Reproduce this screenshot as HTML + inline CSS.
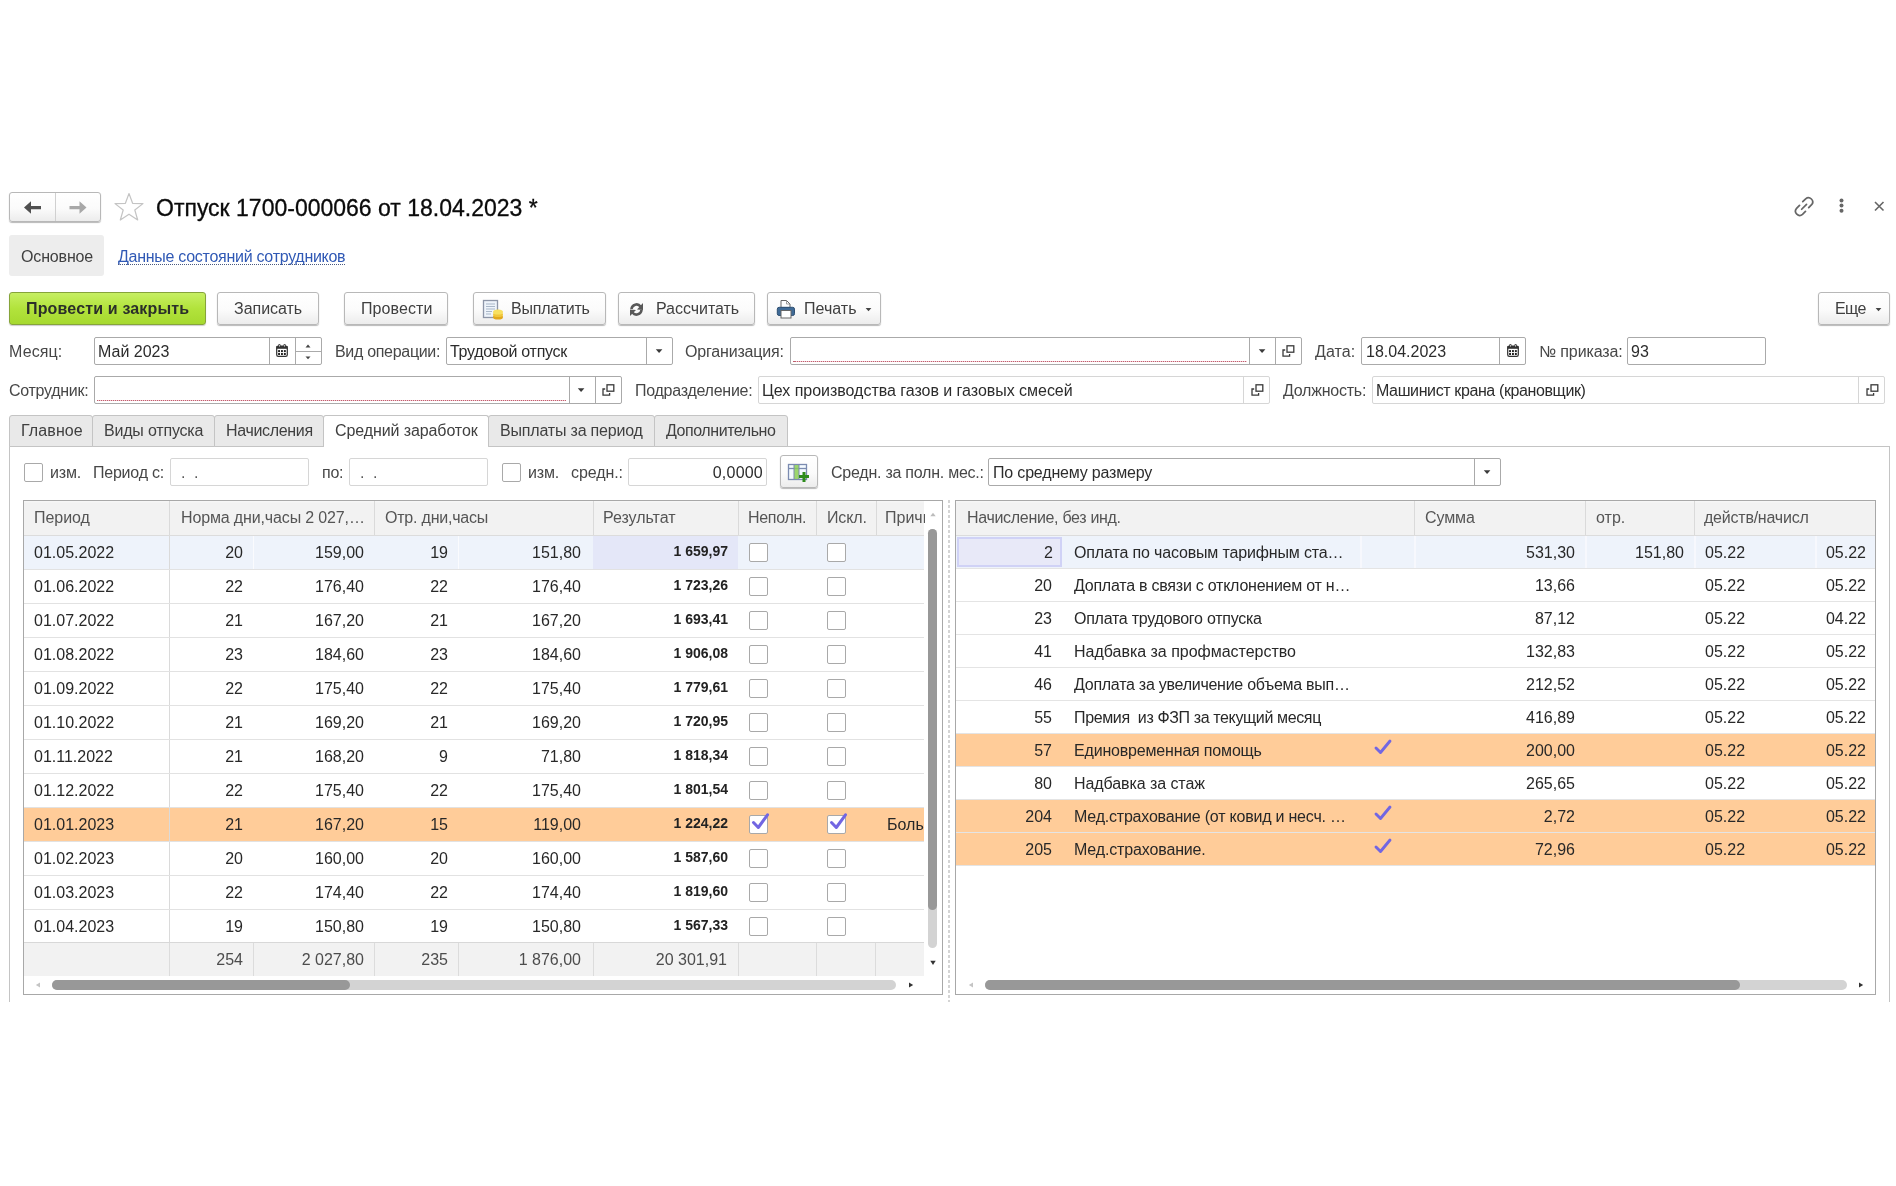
<!DOCTYPE html><html><head><meta charset="utf-8"><title>Отпуск</title><style>
*{box-sizing:border-box}
html,body{margin:0;padding:0;background:#fff}
body{width:1896px;height:1186px;overflow:hidden;position:relative;font-family:"Liberation Sans",sans-serif}
.a{position:absolute}
.t{position:absolute;white-space:pre;line-height:20px;font-family:"Liberation Sans",sans-serif;will-change:transform}
.btn{position:absolute;border:1px solid #b8b8b8;border-radius:3px;background:linear-gradient(#ffffff 0%,#fbfbfb 55%,#ececec 100%);box-shadow:0 1px 1px rgba(0,0,0,0.28)}
.fld{position:absolute;border:1px solid #aaaaaa;border-radius:2px;background:#fff}
.fldl{position:absolute;border:1px solid #d6d6d6;border-radius:2px;background:#fff}
.vl{position:absolute;width:1px}
.hl{position:absolute;height:1px}
.cb{position:absolute;width:19px;height:19px;border:1px solid #a9a9a9;border-radius:2px;background:#fff}
</style></head><body>
<div class="btn" style="left:9px;top:192px;width:92px;height:30px"></div>
<div class="a" style="left:55px;top:193px;width:1px;height:28px;background:#d0d0d0"></div>
<svg class="a" style="left:22px;top:200px" width="22" height="16" viewBox="0 0 22 16"><path d="M2 7.5 L9 1.3 L9 6 L19 6 L19 9.2 L9 9.2 L9 13.7 Z" fill="#505050"/></svg>
<svg class="a" style="left:67px;top:200px" width="22" height="16" viewBox="0 0 22 16"><path d="M19.5 7.5 L12.5 1.3 L12.5 6 L2.5 6 L2.5 9.2 L12.5 9.2 L12.5 13.7 Z" fill="#a8a8a8"/></svg>
<svg class="a" style="left:112px;top:191px" width="34" height="32" viewBox="0 0 34 32"><path d="M17 2.5 L20.6 12.3 L31 12.6 L22.8 19 L25.7 29 L17 23.2 L8.3 29 L11.2 19 L3 12.6 L13.4 12.3 Z" fill="none" stroke="#c4c4c4" stroke-width="1.2" stroke-linejoin="round"/></svg>
<div class="t" style="left:156px;top:198px;font-size:23px;color:#0a0a0a;font-weight:normal;-webkit-text-stroke:0.3px #0a0a0a;">Отпуск 1700-000066 от 18.04.2023 *</div>
<svg class="a" style="left:1792px;top:194px" width="26" height="24" viewBox="0 0 26 24"><g fill="none" stroke="#666" stroke-width="1.6" stroke-linecap="round" transform="translate(-0.6,-0.4) scale(1.08)"><path d="M10.5 7.5 L13.2 4.8 A3.9 3.9 0 0 1 18.7 10.3 L16 13"/><path d="M13 16.5 L10.3 19.2 A3.9 3.9 0 0 1 4.8 13.7 L7.5 11"/><path d="M9.5 14.5 L14 10"/></g></svg>
<svg class="a" style="left:1836px;top:196px" width="12" height="20" viewBox="0 0 12 20"><circle cx="5.5" cy="4.6" r="2" fill="#666"/><circle cx="5.5" cy="9.6" r="2" fill="#666"/><circle cx="5.5" cy="14.8" r="2" fill="#666"/></svg>
<svg class="a" style="left:1872px;top:199px" width="14" height="14" viewBox="0 0 14 14"><path d="M3 3 L11.5 11.5 M11.5 3 L3 11.5" stroke="#666" stroke-width="1.6"/></svg>
<div class="a" style="left:9px;top:235px;width:95px;height:41px;background:#ededed;border-radius:3px"></div>
<div class="t" style="left:21px;top:247px;font-size:16px;color:#404040;font-weight:normal;letter-spacing:-0.157px;">Основное</div>
<div class="t" style="left:118px;top:247px;font-size:16px;color:#3059b5;font-weight:normal;letter-spacing:-0.278px;">Данные состояний сотрудников</div>
<div class="a" style="left:118px;top:264px;width:228px;height:1px;background:repeating-linear-gradient(90deg,#4a5a80 0 1px,transparent 1px 2px)"></div>
<div class="a" style="left:9px;top:292px;width:197px;height:33px;border:1px solid #86a43a;border-radius:3px;background:linear-gradient(#c6ef62 0%,#b2e33c 50%,#a6d92f 100%);box-shadow:0 1px 1px rgba(0,0,0,0.2)"></div>
<div class="t" style="left:26px;top:299px;font-size:16px;color:#2b2f2a;font-weight:bold;letter-spacing:0.159px;">Провести и закрыть</div>
<div class="btn" style="left:217px;top:292px;width:102px;height:33px"></div>
<div class="t" style="left:234px;top:299px;font-size:16px;color:#404040;font-weight:normal;letter-spacing:-0.029px;">Записать</div>
<div class="btn" style="left:344px;top:292px;width:104px;height:33px"></div>
<div class="t" style="left:361px;top:299px;font-size:16px;color:#404040;font-weight:normal;letter-spacing:0.100px;">Провести</div>
<div class="btn" style="left:473px;top:292px;width:133px;height:33px"></div>
<div class="t" style="left:511px;top:299px;font-size:16px;color:#404040;font-weight:normal;letter-spacing:-0.213px;">Выплатить</div>
<svg class="a" style="left:481px;top:298px" width="24" height="24" viewBox="0 0 24 24"><rect x="2.5" y="2.5" width="14" height="17" fill="#eef4fb" stroke="#8d96a8" stroke-width="1.3"/><path d="M5 6 H14 M5 8.5 H14 M5 11 H14 M5 13.5 H11 M5 16 H10" stroke="#a9b7c8" stroke-width="1"/><ellipse cx="17" cy="19" rx="5" ry="2.6" fill="#e2a81c"/><ellipse cx="17" cy="16.5" rx="5" ry="2.6" fill="#f0c63a"/><ellipse cx="17" cy="14" rx="5" ry="2.6" fill="#f8e060"/></svg>
<div class="btn" style="left:618px;top:292px;width:137px;height:33px"></div>
<div class="t" style="left:656px;top:299px;font-size:16px;color:#404040;font-weight:normal;letter-spacing:-0.033px;">Рассчитать</div>
<svg class="a" style="left:628px;top:301px" width="17" height="17" viewBox="0 0 17 17"><g fill="none" stroke="#595959" stroke-width="2.6"><path d="M3.5 8 A5 5 0 0 1 12.5 5.5"/><path d="M13.5 9 A5 5 0 0 1 4.5 11.5"/></g><path d="M15 2 L15 9 L9 8.5 Z" fill="#595959"/><path d="M2 15 L2 8.5 L8 9 Z" fill="#595959"/></svg>
<div class="btn" style="left:767px;top:292px;width:114px;height:33px"></div>
<div class="t" style="left:804px;top:299px;font-size:16px;color:#404040;font-weight:normal;letter-spacing:0.020px;">Печать</div>
<svg class="a" style="left:775px;top:298px" width="22" height="22" viewBox="0 0 22 22"><path d="M6 2.5 H11.5 L15 6 V9.5 H6 Z" fill="#fff" stroke="#666" stroke-width="1"/><path d="M11.5 2.5 V6 H15" fill="none" stroke="#888" stroke-width="0.8"/><rect x="2.3" y="9.3" width="17.2" height="8.2" rx="1.8" fill="#3f6a96" stroke="#2e4f72" stroke-width="1"/><rect x="6" y="12.5" width="10" height="7.5" fill="#fff" stroke="#666" stroke-width="1"/></svg>
<svg class="a" style="left:865px;top:307px" width="8" height="5" viewBox="0 0 8 5"><path d="M0.6 1 H6.4 L3.5 4.2 Z" fill="#444"/></svg>
<div class="btn" style="left:1818px;top:292px;width:72px;height:33px"></div>
<div class="t" style="left:1835px;top:299px;font-size:16px;color:#404040;font-weight:normal;letter-spacing:-0.600px;">Еще</div>
<svg class="a" style="left:1875px;top:307px" width="8" height="5" viewBox="0 0 8 5"><path d="M0.6 1 H6.4 L3.5 4.2 Z" fill="#444"/></svg>
<div class="t" style="left:9px;top:342px;font-size:16px;color:#474747;font-weight:normal;letter-spacing:0.120px;">Месяц:</div>
<div class="fld" style="left:94px;top:337px;width:228px;height:28px"></div>
<div class="a" style="left:269px;top:338px;width:1px;height:26px;background:#aaaaaa"></div>
<div class="a" style="left:295px;top:338px;width:1px;height:26px;background:#aaaaaa"></div>
<div class="a" style="left:296px;top:351px;width:25px;height:1px;background:#aaaaaa"></div>
<div class="t" style="left:98px;top:342px;font-size:16px;color:#2c2c2c;font-weight:normal;">Май 2023</div>
<svg class="a" style="left:275px;top:343px" width="15" height="15" viewBox="0 0 15 15"><rect x="1.7" y="3" width="10.6" height="10.3" rx="1.6" fill="#fff" stroke="#333" stroke-width="1.25"/><rect x="1.5" y="3" width="11" height="2.8" fill="#333"/><rect x="3.3" y="1" width="2.2" height="3.4" rx="1" fill="#333"/><rect x="8.5" y="1" width="2.2" height="3.4" rx="1" fill="#333"/><rect x="4" y="1.8" width="0.8" height="1.8" fill="#ddd"/><rect x="9.2" y="1.8" width="0.8" height="1.8" fill="#ddd"/><g fill="#222"><rect x="3.1" y="7.1" width="1.9" height="2"/><rect x="6" y="7.1" width="1.9" height="2"/><rect x="8.9" y="7.1" width="1.9" height="2"/><rect x="3.1" y="10" width="1.9" height="2"/><rect x="6" y="10" width="1.9" height="2"/><rect x="8.9" y="10" width="1.9" height="2"/></g></svg>
<svg class="a" style="left:305px;top:344px" width="6" height="4" viewBox="0 0 6 4"><path d="M0.5 3.5 H5.5 L3 0.5 Z" fill="#444"/></svg>
<svg class="a" style="left:305px;top:356px" width="6" height="4" viewBox="0 0 6 4"><path d="M0.5 0.5 H5.5 L3 3.3 Z" fill="#444"/></svg>
<div class="t" style="left:335px;top:342px;font-size:16px;color:#474747;font-weight:normal;letter-spacing:-0.308px;">Вид операции:</div>
<div class="fld" style="left:446px;top:337px;width:227px;height:28px"></div>
<div class="a" style="left:646px;top:338px;width:1px;height:26px;background:#aaaaaa"></div>
<div class="t" style="left:450px;top:342px;font-size:16px;color:#2c2c2c;font-weight:normal;letter-spacing:-0.286px;">Трудовой отпуск</div>
<svg class="a" style="left:655px;top:348px" width="9" height="6" viewBox="0 0 9 6"><path d="M0.8 1.2 H7.4 L4.1 5 Z" fill="#3a3a3a"/></svg>
<div class="t" style="left:685px;top:342px;font-size:16px;color:#474747;font-weight:normal;letter-spacing:-0.182px;">Организация:</div>
<div class="fld" style="left:790px;top:337px;width:512px;height:28px"></div>
<div class="a" style="left:1249px;top:338px;width:1px;height:26px;background:#aaaaaa"></div>
<div class="a" style="left:1275px;top:338px;width:1px;height:26px;background:#aaaaaa"></div>
<div class="a" style="left:793px;top:361px;width:454px;height:1px;background:repeating-linear-gradient(90deg,#c0606e 0 1.5px,#f0c8d0 1.5px 2px)"></div>
<svg class="a" style="left:1258px;top:348px" width="9" height="6" viewBox="0 0 9 6"><path d="M0.8 1.2 H7.4 L4.1 5 Z" fill="#3a3a3a"/></svg>
<svg class="a" style="left:1281px;top:344px" width="15" height="15" viewBox="0 0 15 15"><rect x="6" y="1.8" width="6.8" height="6.4" fill="none" stroke="#3a3a3a" stroke-width="1.3"/><path d="M4.2 6 H2 V12.1 H8.6 V10" fill="none" stroke="#3a3a3a" stroke-width="1.3"/></svg>
<div class="t" style="left:1315px;top:342px;font-size:16px;color:#474747;font-weight:normal;letter-spacing:0.075px;">Дата:</div>
<div class="fld" style="left:1361px;top:337px;width:165px;height:28px"></div>
<div class="a" style="left:1499px;top:338px;width:1px;height:26px;background:#aaaaaa"></div>
<div class="t" style="left:1366px;top:342px;font-size:16px;color:#2c2c2c;font-weight:normal;">18.04.2023</div>
<svg class="a" style="left:1506px;top:343px" width="15" height="15" viewBox="0 0 15 15"><rect x="1.7" y="3" width="10.6" height="10.3" rx="1.6" fill="#fff" stroke="#333" stroke-width="1.25"/><rect x="1.5" y="3" width="11" height="2.8" fill="#333"/><rect x="3.3" y="1" width="2.2" height="3.4" rx="1" fill="#333"/><rect x="8.5" y="1" width="2.2" height="3.4" rx="1" fill="#333"/><rect x="4" y="1.8" width="0.8" height="1.8" fill="#ddd"/><rect x="9.2" y="1.8" width="0.8" height="1.8" fill="#ddd"/><g fill="#222"><rect x="3.1" y="7.1" width="1.9" height="2"/><rect x="6" y="7.1" width="1.9" height="2"/><rect x="8.9" y="7.1" width="1.9" height="2"/><rect x="3.1" y="10" width="1.9" height="2"/><rect x="6" y="10" width="1.9" height="2"/><rect x="8.9" y="10" width="1.9" height="2"/></g></svg>
<div class="t" style="left:1539px;top:342px;font-size:16px;color:#474747;font-weight:normal;letter-spacing:-0.133px;">№ приказа:</div>
<div class="fld" style="left:1627px;top:337px;width:139px;height:28px"></div>
<div class="t" style="left:1631px;top:342px;font-size:16px;color:#2c2c2c;font-weight:normal;">93</div>
<div class="t" style="left:9px;top:381px;font-size:16px;color:#474747;font-weight:normal;letter-spacing:-0.278px;">Сотрудник:</div>
<div class="fld" style="left:94px;top:376px;width:528px;height:28px"></div>
<div class="a" style="left:569px;top:377px;width:1px;height:26px;background:#aaaaaa"></div>
<div class="a" style="left:595px;top:377px;width:1px;height:26px;background:#aaaaaa"></div>
<div class="a" style="left:97px;top:400px;width:469px;height:1px;background:repeating-linear-gradient(90deg,#c0606e 0 1.5px,#f0c8d0 1.5px 2px)"></div>
<svg class="a" style="left:577px;top:387px" width="9" height="6" viewBox="0 0 9 6"><path d="M0.8 1.2 H7.4 L4.1 5 Z" fill="#3a3a3a"/></svg>
<svg class="a" style="left:601px;top:383px" width="15" height="15" viewBox="0 0 15 15"><rect x="6" y="1.8" width="6.8" height="6.4" fill="none" stroke="#3a3a3a" stroke-width="1.3"/><path d="M4.2 6 H2 V12.1 H8.6 V10" fill="none" stroke="#3a3a3a" stroke-width="1.3"/></svg>
<div class="t" style="left:635px;top:381px;font-size:16px;color:#474747;font-weight:normal;letter-spacing:-0.262px;">Подразделение:</div>
<div class="fldl" style="left:758px;top:376px;width:512px;height:28px"></div>
<div class="a" style="left:1243px;top:377px;width:1px;height:26px;background:#d6d6d6"></div>
<div class="t" style="left:762px;top:381px;font-size:16px;color:#2c2c2c;font-weight:normal;letter-spacing:-0.029px;">Цех производства газов и газовых смесей</div>
<svg class="a" style="left:1250px;top:383px" width="15" height="15" viewBox="0 0 15 15"><rect x="6" y="1.8" width="6.8" height="6.4" fill="none" stroke="#3a3a3a" stroke-width="1.3"/><path d="M4.2 6 H2 V12.1 H8.6 V10" fill="none" stroke="#3a3a3a" stroke-width="1.3"/></svg>
<div class="t" style="left:1283px;top:381px;font-size:16px;color:#474747;font-weight:normal;letter-spacing:-0.233px;">Должность:</div>
<div class="fldl" style="left:1372px;top:376px;width:513px;height:28px"></div>
<div class="a" style="left:1858px;top:377px;width:1px;height:26px;background:#d6d6d6"></div>
<div class="t" style="left:1376px;top:381px;font-size:16px;color:#2c2c2c;font-weight:normal;letter-spacing:-0.384px;">Машинист крана (крановщик)</div>
<svg class="a" style="left:1865px;top:383px" width="15" height="15" viewBox="0 0 15 15"><rect x="6" y="1.8" width="6.8" height="6.4" fill="none" stroke="#3a3a3a" stroke-width="1.3"/><path d="M4.2 6 H2 V12.1 H8.6 V10" fill="none" stroke="#3a3a3a" stroke-width="1.3"/></svg>
<div class="a" style="left:9px;top:446px;width:1px;height:556px;background:#c4c4c4"></div>
<div class="a" style="left:1889px;top:446px;width:1px;height:556px;background:#c4c4c4"></div>
<div class="a" style="left:9px;top:446px;width:1881px;height:1px;background:#c4c4c4"></div>
<div class="a" style="left:9px;top:415px;width:84px;height:32px;border:1px solid #c4c4c4;border-radius:3px 3px 0 0;background:#e9e9e9"></div>
<div class="t" style="left:21px;top:421px;font-size:16px;color:#404040;font-weight:normal;letter-spacing:0.100px;">Главное</div>
<div class="a" style="left:92px;top:415px;width:123px;height:32px;border:1px solid #c4c4c4;border-radius:3px 3px 0 0;background:#e9e9e9"></div>
<div class="t" style="left:104px;top:421px;font-size:16px;color:#404040;font-weight:normal;letter-spacing:-0.191px;">Виды отпуска</div>
<div class="a" style="left:214px;top:415px;width:110px;height:32px;border:1px solid #c4c4c4;border-radius:3px 3px 0 0;background:#e9e9e9"></div>
<div class="t" style="left:226px;top:421px;font-size:16px;color:#404040;font-weight:normal;letter-spacing:-0.322px;">Начисления</div>
<div class="a" style="left:323px;top:415px;width:166px;height:32px;border:1px solid #c4c4c4;border-bottom:none;border-radius:3px 3px 0 0;background:#fff"></div>
<div class="t" style="left:335px;top:421px;font-size:16px;color:#404040;font-weight:normal;letter-spacing:-0.100px;">Средний заработок</div>
<div class="a" style="left:488px;top:415px;width:167px;height:32px;border:1px solid #c4c4c4;border-radius:3px 3px 0 0;background:#e9e9e9"></div>
<div class="t" style="left:500px;top:421px;font-size:16px;color:#404040;font-weight:normal;letter-spacing:-0.188px;">Выплаты за период</div>
<div class="a" style="left:654px;top:415px;width:134px;height:32px;border:1px solid #c4c4c4;border-radius:3px 3px 0 0;background:#e9e9e9"></div>
<div class="t" style="left:666px;top:421px;font-size:16px;color:#404040;font-weight:normal;letter-spacing:-0.442px;">Дополнительно</div>
<div class="cb" style="left:24px;top:463px;width:19px;height:19px"></div>
<div class="t" style="left:50px;top:463px;font-size:16px;color:#474747;font-weight:normal;letter-spacing:-0.167px;">изм.</div>
<div class="t" style="left:93px;top:463px;font-size:16px;color:#474747;font-weight:normal;letter-spacing:-0.225px;">Период с:</div>
<div class="fldl" style="left:170px;top:458px;width:139px;height:28px"></div>
<div class="t" style="left:181px;top:463px;font-size:16px;color:#555;font-weight:normal;">.</div>
<div class="t" style="left:194px;top:463px;font-size:16px;color:#555;font-weight:normal;">.</div>
<div class="t" style="left:322px;top:463px;font-size:16px;color:#474747;font-weight:normal;letter-spacing:-0.250px;">по:</div>
<div class="fldl" style="left:349px;top:458px;width:139px;height:28px"></div>
<div class="t" style="left:360px;top:463px;font-size:16px;color:#555;font-weight:normal;">.</div>
<div class="t" style="left:373px;top:463px;font-size:16px;color:#555;font-weight:normal;">.</div>
<div class="cb" style="left:502px;top:463px;width:19px;height:19px"></div>
<div class="t" style="left:528px;top:463px;font-size:16px;color:#474747;font-weight:normal;letter-spacing:-0.167px;">изм.</div>
<div class="t" style="left:571px;top:463px;font-size:16px;color:#474747;font-weight:normal;letter-spacing:-0.083px;">средн.:</div>
<div class="fldl" style="left:628px;top:458px;width:139px;height:28px"></div>
<div class="t" style="left:163px;width:600px;text-align:right;top:463px;font-size:16px;color:#2c2c2c;font-weight:normal;letter-spacing:0.220px;">0,0000</div>
<div class="btn" style="left:780px;top:455px;width:38px;height:33px"></div>
<svg class="a" style="left:787px;top:463px" width="24" height="20" viewBox="0 0 24 20"><rect x="1.5" y="1.5" width="18" height="15" fill="#f4faff" stroke="#7b8bb0" stroke-width="1.3"/><path d="M1.5 5.5 H19.5" stroke="#7b8bb0" stroke-width="1.3"/><rect x="7" y="2" width="5" height="14" fill="#8ccf55" opacity="0.85"/><path d="M7 2 V16 M12 2 V16" stroke="#7b8bb0" stroke-width="1"/><path d="M12 13.5 H22 M17 9 V19" stroke="#2e8c1c" stroke-width="3"/></svg>
<div class="t" style="left:831px;top:463px;font-size:16px;color:#474747;font-weight:normal;letter-spacing:-0.240px;">Средн. за полн. мес.:</div>
<div class="fld" style="left:988px;top:458px;width:513px;height:28px"></div>
<div class="a" style="left:1474px;top:459px;width:1px;height:26px;background:#aaaaaa"></div>
<div class="t" style="left:993px;top:463px;font-size:16px;color:#2c2c2c;font-weight:normal;letter-spacing:-0.178px;">По среднему размеру</div>
<svg class="a" style="left:1483px;top:469px" width="9" height="6" viewBox="0 0 9 6"><path d="M0.8 1.2 H7.4 L4.1 5 Z" fill="#3a3a3a"/></svg>
<div class="a" style="left:23px;top:500px;width:920px;height:495px;border:1px solid #a8a8a8;background:#fff"></div>
<div class="a" style="left:24px;top:501px;width:900px;height:34px;background:linear-gradient(#f6f6f6 0,#f6f6f6 1px,#f2f2f2 2px)"></div>
<div class="a" style="left:24px;top:535px;width:900px;height:1px;background:#dcdcdc"></div>
<div class="a" style="left:169px;top:501px;width:1px;height:34px;background:#dadada"></div>
<div class="a" style="left:374px;top:501px;width:1px;height:34px;background:#dadada"></div>
<div class="a" style="left:593px;top:501px;width:1px;height:34px;background:#dadada"></div>
<div class="a" style="left:738px;top:501px;width:1px;height:34px;background:#dadada"></div>
<div class="a" style="left:816px;top:501px;width:1px;height:34px;background:#dadada"></div>
<div class="a" style="left:876px;top:501px;width:1px;height:34px;background:#dadada"></div>
<div class="t" style="left:34px;top:508px;font-size:16px;color:#555555;font-weight:normal;letter-spacing:-0.040px;">Период</div>
<div class="t" style="left:181px;top:508px;font-size:16px;color:#555555;font-weight:normal;letter-spacing:-0.143px;">Норма дни,часы 2 027,…</div>
<div class="t" style="left:385px;top:508px;font-size:16px;color:#555555;font-weight:normal;letter-spacing:-0.208px;">Отр. дни,часы</div>
<div class="t" style="left:603px;top:508px;font-size:16px;color:#555555;font-weight:normal;letter-spacing:-0.037px;">Результат</div>
<div class="t" style="left:748px;top:508px;font-size:16px;color:#555555;font-weight:normal;letter-spacing:-0.300px;">Неполн.</div>
<div class="t" style="left:827px;top:508px;font-size:16px;color:#555555;font-weight:normal;letter-spacing:-0.150px;">Искл.</div>
<div class="a" style="left:885px;top:508px;width:40px;height:20px;overflow:hidden"><div class="t" style="left:0;top:0;font-size:16px;color:#555">Причина</div></div>
<div class="a" style="left:24px;top:536px;width:900px;height:33px;background:#eef3fb"></div>
<div class="a" style="left:593px;top:536px;width:145px;height:33px;background:#e4e7f8"></div>
<div class="a" style="left:253px;top:536px;width:1px;height:33px;background:#fafbfe"></div>
<div class="a" style="left:458px;top:536px;width:1px;height:33px;background:#fafbfe"></div>
<div class="a" style="left:24px;top:569px;width:900px;height:1px;background:#e2e2e2"></div>
<div class="a" style="left:169px;top:536px;width:1px;height:33px;background:#dadada"></div>
<div class="t" style="left:34px;top:543px;font-size:16px;color:#282828;font-weight:normal;">01.05.2022</div>
<div class="t" style="left:-357px;width:600px;text-align:right;top:543px;font-size:16px;color:#282828;font-weight:normal;">20</div>
<div class="t" style="left:-236px;width:600px;text-align:right;top:543px;font-size:16px;color:#282828;font-weight:normal;">159,00</div>
<div class="t" style="left:-152px;width:600px;text-align:right;top:543px;font-size:16px;color:#282828;font-weight:normal;">19</div>
<div class="t" style="left:-19px;width:600px;text-align:right;top:543px;font-size:16px;color:#282828;font-weight:normal;">151,80</div>
<div class="t" style="left:128px;width:600px;text-align:right;top:541px;font-size:14px;color:#222;font-weight:bold;">1 659,97</div>
<div class="cb" style="left:749px;top:543px"></div>
<div class="cb" style="left:827px;top:543px"></div>
<div class="a" style="left:24px;top:603px;width:900px;height:1px;background:#e2e2e2"></div>
<div class="a" style="left:169px;top:570px;width:1px;height:33px;background:#dadada"></div>
<div class="t" style="left:34px;top:577px;font-size:16px;color:#282828;font-weight:normal;">01.06.2022</div>
<div class="t" style="left:-357px;width:600px;text-align:right;top:577px;font-size:16px;color:#282828;font-weight:normal;">22</div>
<div class="t" style="left:-236px;width:600px;text-align:right;top:577px;font-size:16px;color:#282828;font-weight:normal;">176,40</div>
<div class="t" style="left:-152px;width:600px;text-align:right;top:577px;font-size:16px;color:#282828;font-weight:normal;">22</div>
<div class="t" style="left:-19px;width:600px;text-align:right;top:577px;font-size:16px;color:#282828;font-weight:normal;">176,40</div>
<div class="t" style="left:128px;width:600px;text-align:right;top:575px;font-size:14px;color:#222;font-weight:bold;">1 723,26</div>
<div class="cb" style="left:749px;top:577px"></div>
<div class="cb" style="left:827px;top:577px"></div>
<div class="a" style="left:24px;top:637px;width:900px;height:1px;background:#e2e2e2"></div>
<div class="a" style="left:169px;top:604px;width:1px;height:33px;background:#dadada"></div>
<div class="t" style="left:34px;top:611px;font-size:16px;color:#282828;font-weight:normal;">01.07.2022</div>
<div class="t" style="left:-357px;width:600px;text-align:right;top:611px;font-size:16px;color:#282828;font-weight:normal;">21</div>
<div class="t" style="left:-236px;width:600px;text-align:right;top:611px;font-size:16px;color:#282828;font-weight:normal;">167,20</div>
<div class="t" style="left:-152px;width:600px;text-align:right;top:611px;font-size:16px;color:#282828;font-weight:normal;">21</div>
<div class="t" style="left:-19px;width:600px;text-align:right;top:611px;font-size:16px;color:#282828;font-weight:normal;">167,20</div>
<div class="t" style="left:128px;width:600px;text-align:right;top:609px;font-size:14px;color:#222;font-weight:bold;">1 693,41</div>
<div class="cb" style="left:749px;top:611px"></div>
<div class="cb" style="left:827px;top:611px"></div>
<div class="a" style="left:24px;top:671px;width:900px;height:1px;background:#e2e2e2"></div>
<div class="a" style="left:169px;top:638px;width:1px;height:33px;background:#dadada"></div>
<div class="t" style="left:34px;top:645px;font-size:16px;color:#282828;font-weight:normal;">01.08.2022</div>
<div class="t" style="left:-357px;width:600px;text-align:right;top:645px;font-size:16px;color:#282828;font-weight:normal;">23</div>
<div class="t" style="left:-236px;width:600px;text-align:right;top:645px;font-size:16px;color:#282828;font-weight:normal;">184,60</div>
<div class="t" style="left:-152px;width:600px;text-align:right;top:645px;font-size:16px;color:#282828;font-weight:normal;">23</div>
<div class="t" style="left:-19px;width:600px;text-align:right;top:645px;font-size:16px;color:#282828;font-weight:normal;">184,60</div>
<div class="t" style="left:128px;width:600px;text-align:right;top:643px;font-size:14px;color:#222;font-weight:bold;">1 906,08</div>
<div class="cb" style="left:749px;top:645px"></div>
<div class="cb" style="left:827px;top:645px"></div>
<div class="a" style="left:24px;top:705px;width:900px;height:1px;background:#e2e2e2"></div>
<div class="a" style="left:169px;top:672px;width:1px;height:33px;background:#dadada"></div>
<div class="t" style="left:34px;top:679px;font-size:16px;color:#282828;font-weight:normal;">01.09.2022</div>
<div class="t" style="left:-357px;width:600px;text-align:right;top:679px;font-size:16px;color:#282828;font-weight:normal;">22</div>
<div class="t" style="left:-236px;width:600px;text-align:right;top:679px;font-size:16px;color:#282828;font-weight:normal;">175,40</div>
<div class="t" style="left:-152px;width:600px;text-align:right;top:679px;font-size:16px;color:#282828;font-weight:normal;">22</div>
<div class="t" style="left:-19px;width:600px;text-align:right;top:679px;font-size:16px;color:#282828;font-weight:normal;">175,40</div>
<div class="t" style="left:128px;width:600px;text-align:right;top:677px;font-size:14px;color:#222;font-weight:bold;">1 779,61</div>
<div class="cb" style="left:749px;top:679px"></div>
<div class="cb" style="left:827px;top:679px"></div>
<div class="a" style="left:24px;top:739px;width:900px;height:1px;background:#e2e2e2"></div>
<div class="a" style="left:169px;top:706px;width:1px;height:33px;background:#dadada"></div>
<div class="t" style="left:34px;top:713px;font-size:16px;color:#282828;font-weight:normal;">01.10.2022</div>
<div class="t" style="left:-357px;width:600px;text-align:right;top:713px;font-size:16px;color:#282828;font-weight:normal;">21</div>
<div class="t" style="left:-236px;width:600px;text-align:right;top:713px;font-size:16px;color:#282828;font-weight:normal;">169,20</div>
<div class="t" style="left:-152px;width:600px;text-align:right;top:713px;font-size:16px;color:#282828;font-weight:normal;">21</div>
<div class="t" style="left:-19px;width:600px;text-align:right;top:713px;font-size:16px;color:#282828;font-weight:normal;">169,20</div>
<div class="t" style="left:128px;width:600px;text-align:right;top:711px;font-size:14px;color:#222;font-weight:bold;">1 720,95</div>
<div class="cb" style="left:749px;top:713px"></div>
<div class="cb" style="left:827px;top:713px"></div>
<div class="a" style="left:24px;top:773px;width:900px;height:1px;background:#e2e2e2"></div>
<div class="a" style="left:169px;top:740px;width:1px;height:33px;background:#dadada"></div>
<div class="t" style="left:34px;top:747px;font-size:16px;color:#282828;font-weight:normal;">01.11.2022</div>
<div class="t" style="left:-357px;width:600px;text-align:right;top:747px;font-size:16px;color:#282828;font-weight:normal;">21</div>
<div class="t" style="left:-236px;width:600px;text-align:right;top:747px;font-size:16px;color:#282828;font-weight:normal;">168,20</div>
<div class="t" style="left:-152px;width:600px;text-align:right;top:747px;font-size:16px;color:#282828;font-weight:normal;">9</div>
<div class="t" style="left:-19px;width:600px;text-align:right;top:747px;font-size:16px;color:#282828;font-weight:normal;">71,80</div>
<div class="t" style="left:128px;width:600px;text-align:right;top:745px;font-size:14px;color:#222;font-weight:bold;">1 818,34</div>
<div class="cb" style="left:749px;top:747px"></div>
<div class="cb" style="left:827px;top:747px"></div>
<div class="a" style="left:24px;top:807px;width:900px;height:1px;background:#e2e2e2"></div>
<div class="a" style="left:169px;top:774px;width:1px;height:33px;background:#dadada"></div>
<div class="t" style="left:34px;top:781px;font-size:16px;color:#282828;font-weight:normal;">01.12.2022</div>
<div class="t" style="left:-357px;width:600px;text-align:right;top:781px;font-size:16px;color:#282828;font-weight:normal;">22</div>
<div class="t" style="left:-236px;width:600px;text-align:right;top:781px;font-size:16px;color:#282828;font-weight:normal;">175,40</div>
<div class="t" style="left:-152px;width:600px;text-align:right;top:781px;font-size:16px;color:#282828;font-weight:normal;">22</div>
<div class="t" style="left:-19px;width:600px;text-align:right;top:781px;font-size:16px;color:#282828;font-weight:normal;">175,40</div>
<div class="t" style="left:128px;width:600px;text-align:right;top:779px;font-size:14px;color:#222;font-weight:bold;">1 801,54</div>
<div class="cb" style="left:749px;top:781px"></div>
<div class="cb" style="left:827px;top:781px"></div>
<div class="a" style="left:24px;top:808px;width:900px;height:33px;background:#ffcc99"></div>
<div class="a" style="left:24px;top:841px;width:900px;height:1px;background:#e2e2e2"></div>
<div class="a" style="left:169px;top:808px;width:1px;height:33px;background:#dadada"></div>
<div class="t" style="left:34px;top:815px;font-size:16px;color:#282828;font-weight:normal;">01.01.2023</div>
<div class="t" style="left:-357px;width:600px;text-align:right;top:815px;font-size:16px;color:#282828;font-weight:normal;">21</div>
<div class="t" style="left:-236px;width:600px;text-align:right;top:815px;font-size:16px;color:#282828;font-weight:normal;">167,20</div>
<div class="t" style="left:-152px;width:600px;text-align:right;top:815px;font-size:16px;color:#282828;font-weight:normal;">15</div>
<div class="t" style="left:-19px;width:600px;text-align:right;top:815px;font-size:16px;color:#282828;font-weight:normal;">119,00</div>
<div class="t" style="left:128px;width:600px;text-align:right;top:813px;font-size:14px;color:#222;font-weight:bold;">1 224,22</div>
<div class="cb" style="left:749px;top:815px"></div>
<div class="cb" style="left:827px;top:815px"></div>
<svg class="a" style="left:750px;top:811px" width="22" height="22" viewBox="0 0 22 22"><path d="M3.5 11.5 L8.3 16.5 L17.5 3.8" fill="none" stroke="#7266e2" stroke-width="3" stroke-linecap="round" stroke-linejoin="round"/></svg>
<svg class="a" style="left:828px;top:811px" width="22" height="22" viewBox="0 0 22 22"><path d="M3.5 11.5 L8.3 16.5 L17.5 3.8" fill="none" stroke="#7266e2" stroke-width="3" stroke-linecap="round" stroke-linejoin="round"/></svg>
<div class="t" style="left:887px;top:815px;font-size:16px;color:#282828;font-weight:normal;">Боль</div>
<div class="a" style="left:24px;top:875px;width:900px;height:1px;background:#e2e2e2"></div>
<div class="a" style="left:169px;top:842px;width:1px;height:33px;background:#dadada"></div>
<div class="t" style="left:34px;top:849px;font-size:16px;color:#282828;font-weight:normal;">01.02.2023</div>
<div class="t" style="left:-357px;width:600px;text-align:right;top:849px;font-size:16px;color:#282828;font-weight:normal;">20</div>
<div class="t" style="left:-236px;width:600px;text-align:right;top:849px;font-size:16px;color:#282828;font-weight:normal;">160,00</div>
<div class="t" style="left:-152px;width:600px;text-align:right;top:849px;font-size:16px;color:#282828;font-weight:normal;">20</div>
<div class="t" style="left:-19px;width:600px;text-align:right;top:849px;font-size:16px;color:#282828;font-weight:normal;">160,00</div>
<div class="t" style="left:128px;width:600px;text-align:right;top:847px;font-size:14px;color:#222;font-weight:bold;">1 587,60</div>
<div class="cb" style="left:749px;top:849px"></div>
<div class="cb" style="left:827px;top:849px"></div>
<div class="a" style="left:24px;top:909px;width:900px;height:1px;background:#e2e2e2"></div>
<div class="a" style="left:169px;top:876px;width:1px;height:33px;background:#dadada"></div>
<div class="t" style="left:34px;top:883px;font-size:16px;color:#282828;font-weight:normal;">01.03.2023</div>
<div class="t" style="left:-357px;width:600px;text-align:right;top:883px;font-size:16px;color:#282828;font-weight:normal;">22</div>
<div class="t" style="left:-236px;width:600px;text-align:right;top:883px;font-size:16px;color:#282828;font-weight:normal;">174,40</div>
<div class="t" style="left:-152px;width:600px;text-align:right;top:883px;font-size:16px;color:#282828;font-weight:normal;">22</div>
<div class="t" style="left:-19px;width:600px;text-align:right;top:883px;font-size:16px;color:#282828;font-weight:normal;">174,40</div>
<div class="t" style="left:128px;width:600px;text-align:right;top:881px;font-size:14px;color:#222;font-weight:bold;">1 819,60</div>
<div class="cb" style="left:749px;top:883px"></div>
<div class="cb" style="left:827px;top:883px"></div>
<div class="a" style="left:24px;top:943px;width:900px;height:1px;background:#e2e2e2"></div>
<div class="a" style="left:169px;top:910px;width:1px;height:33px;background:#dadada"></div>
<div class="t" style="left:34px;top:917px;font-size:16px;color:#282828;font-weight:normal;">01.04.2023</div>
<div class="t" style="left:-357px;width:600px;text-align:right;top:917px;font-size:16px;color:#282828;font-weight:normal;">19</div>
<div class="t" style="left:-236px;width:600px;text-align:right;top:917px;font-size:16px;color:#282828;font-weight:normal;">150,80</div>
<div class="t" style="left:-152px;width:600px;text-align:right;top:917px;font-size:16px;color:#282828;font-weight:normal;">19</div>
<div class="t" style="left:-19px;width:600px;text-align:right;top:917px;font-size:16px;color:#282828;font-weight:normal;">150,80</div>
<div class="t" style="left:128px;width:600px;text-align:right;top:915px;font-size:14px;color:#222;font-weight:bold;">1 567,33</div>
<div class="cb" style="left:749px;top:917px"></div>
<div class="cb" style="left:827px;top:917px"></div>
<div class="a" style="left:24px;top:943px;width:900px;height:33px;background:#f2f2f2"></div>
<div class="a" style="left:24px;top:942px;width:900px;height:1px;background:#d8d8d8"></div>
<div class="a" style="left:169px;top:943px;width:1px;height:33px;background:#dcdcdc"></div>
<div class="a" style="left:253px;top:943px;width:1px;height:33px;background:#dcdcdc"></div>
<div class="a" style="left:374px;top:943px;width:1px;height:33px;background:#dcdcdc"></div>
<div class="a" style="left:458px;top:943px;width:1px;height:33px;background:#dcdcdc"></div>
<div class="a" style="left:593px;top:943px;width:1px;height:33px;background:#dcdcdc"></div>
<div class="a" style="left:738px;top:943px;width:1px;height:33px;background:#dcdcdc"></div>
<div class="a" style="left:816px;top:943px;width:1px;height:33px;background:#dcdcdc"></div>
<div class="a" style="left:875px;top:943px;width:1px;height:33px;background:#dcdcdc"></div>
<div class="t" style="left:-357px;width:600px;text-align:right;top:950px;font-size:16px;color:#4d4d4d;font-weight:normal;">254</div>
<div class="t" style="left:-236px;width:600px;text-align:right;top:950px;font-size:16px;color:#4d4d4d;font-weight:normal;">2 027,80</div>
<div class="t" style="left:-152px;width:600px;text-align:right;top:950px;font-size:16px;color:#4d4d4d;font-weight:normal;">235</div>
<div class="t" style="left:-19px;width:600px;text-align:right;top:950px;font-size:16px;color:#4d4d4d;font-weight:normal;">1 876,00</div>
<div class="t" style="left:127px;width:600px;text-align:right;top:950px;font-size:16px;color:#4d4d4d;font-weight:normal;">20 301,91</div>
<div class="a" style="left:928px;top:529px;width:9px;height:419px;background:#d3d3d3;border-radius:5px"></div>
<div class="a" style="left:928px;top:529px;width:9px;height:381px;background:#989898;border-radius:5px"></div>
<svg class="a" style="left:930px;top:512px" width="6" height="5" viewBox="0 0 6 5"><path d="M0.3 4.2 H5.7 L3 0.8 Z" fill="#bcbcbc"/></svg>
<svg class="a" style="left:930px;top:960px" width="6" height="6" viewBox="0 0 6 6"><path d="M0.3 0.8 H5.7 L3 5 Z" fill="#333"/></svg>
<div class="a" style="left:52px;top:980px;width:844px;height:10px;background:#d3d3d3;border-radius:5px"></div>
<div class="a" style="left:52px;top:980px;width:298px;height:10px;background:#989898;border-radius:5px"></div>
<svg class="a" style="left:34px;top:981px" width="7" height="8" viewBox="0 0 7 8"><path d="M6 1.5 V6.5 L1.8 4 Z" fill="#c4c4c4"/></svg>
<svg class="a" style="left:908px;top:981px" width="7" height="8" viewBox="0 0 7 8"><path d="M1 1.5 V6.5 L5.2 4 Z" fill="#333"/></svg>
<div class="a" style="left:948px;top:500px;width:2px;height:502px;background:repeating-linear-gradient(180deg,#d4d4d4 0 3px,transparent 3px 5px)"></div>
<div class="a" style="left:955px;top:500px;width:921px;height:495px;border:1px solid #a8a8a8;background:#fff"></div>
<div class="a" style="left:956px;top:501px;width:919px;height:34px;background:linear-gradient(#f6f6f6 0,#f6f6f6 1px,#f2f2f2 2px)"></div>
<div class="a" style="left:956px;top:535px;width:919px;height:1px;background:#dcdcdc"></div>
<div class="a" style="left:1414px;top:501px;width:1px;height:34px;background:#dadada"></div>
<div class="a" style="left:1585px;top:501px;width:1px;height:34px;background:#dadada"></div>
<div class="a" style="left:1694px;top:501px;width:1px;height:34px;background:#dadada"></div>
<div class="t" style="left:967px;top:508px;font-size:16px;color:#555555;font-weight:normal;letter-spacing:-0.316px;">Начисление, без инд.</div>
<div class="t" style="left:1425px;top:508px;font-size:16px;color:#555555;font-weight:normal;letter-spacing:-0.100px;">Сумма</div>
<div class="t" style="left:1596px;top:508px;font-size:16px;color:#555555;font-weight:normal;">отр.</div>
<div class="t" style="left:1704px;top:508px;font-size:16px;color:#555555;font-weight:normal;letter-spacing:-0.225px;">действ/начисл</div>
<div class="a" style="left:956px;top:536px;width:919px;height:32px;background:#eef3fb"></div>
<div class="a" style="left:957px;top:537px;width:105px;height:30px;background:#e8e9f8;border:2px solid #d0d2f6"></div>
<div class="a" style="left:1360px;top:536px;width:2px;height:32px;background:#f7f8fd"></div>
<div class="a" style="left:1414px;top:536px;width:2px;height:32px;background:#f7f8fd"></div>
<div class="a" style="left:1585px;top:536px;width:2px;height:32px;background:#f7f8fd"></div>
<div class="a" style="left:1694px;top:536px;width:2px;height:32px;background:#f7f8fd"></div>
<div class="a" style="left:1815px;top:536px;width:2px;height:32px;background:#f7f8fd"></div>
<div class="a" style="left:956px;top:568px;width:919px;height:1px;background:#e4e4e4"></div>
<div class="t" style="left:453px;width:600px;text-align:right;top:543px;font-size:16px;color:#282828;font-weight:normal;">2</div>
<div class="t" style="left:1074px;top:543px;font-size:16px;color:#282828;font-weight:normal;letter-spacing:-0.153px;">Оплата по часовым тарифным ста…</div>
<div class="t" style="left:975px;width:600px;text-align:right;top:543px;font-size:16px;color:#282828;font-weight:normal;">531,30</div>
<div class="t" style="left:1084px;width:600px;text-align:right;top:543px;font-size:16px;color:#282828;font-weight:normal;">151,80</div>
<div class="t" style="left:1705px;top:543px;font-size:16px;color:#282828;font-weight:normal;">05.22</div>
<div class="t" style="left:1266px;width:600px;text-align:right;top:543px;font-size:16px;color:#282828;font-weight:normal;">05.22</div>
<div class="a" style="left:956px;top:601px;width:919px;height:1px;background:#e4e4e4"></div>
<div class="t" style="left:452px;width:600px;text-align:right;top:576px;font-size:16px;color:#282828;font-weight:normal;">20</div>
<div class="t" style="left:1074px;top:576px;font-size:16px;color:#282828;font-weight:normal;letter-spacing:-0.238px;">Доплата в связи с отклонением от н…</div>
<div class="t" style="left:975px;width:600px;text-align:right;top:576px;font-size:16px;color:#282828;font-weight:normal;">13,66</div>
<div class="t" style="left:1705px;top:576px;font-size:16px;color:#282828;font-weight:normal;">05.22</div>
<div class="t" style="left:1266px;width:600px;text-align:right;top:576px;font-size:16px;color:#282828;font-weight:normal;">05.22</div>
<div class="a" style="left:956px;top:634px;width:919px;height:1px;background:#e4e4e4"></div>
<div class="t" style="left:452px;width:600px;text-align:right;top:609px;font-size:16px;color:#282828;font-weight:normal;">23</div>
<div class="t" style="left:1074px;top:609px;font-size:16px;color:#282828;font-weight:normal;letter-spacing:-0.257px;">Оплата трудового отпуска</div>
<div class="t" style="left:975px;width:600px;text-align:right;top:609px;font-size:16px;color:#282828;font-weight:normal;">87,12</div>
<div class="t" style="left:1705px;top:609px;font-size:16px;color:#282828;font-weight:normal;">05.22</div>
<div class="t" style="left:1266px;width:600px;text-align:right;top:609px;font-size:16px;color:#282828;font-weight:normal;">04.22</div>
<div class="a" style="left:956px;top:667px;width:919px;height:1px;background:#e4e4e4"></div>
<div class="t" style="left:452px;width:600px;text-align:right;top:642px;font-size:16px;color:#282828;font-weight:normal;">41</div>
<div class="t" style="left:1074px;top:642px;font-size:16px;color:#282828;font-weight:normal;letter-spacing:-0.016px;">Надбавка за профмастерство</div>
<div class="t" style="left:975px;width:600px;text-align:right;top:642px;font-size:16px;color:#282828;font-weight:normal;">132,83</div>
<div class="t" style="left:1705px;top:642px;font-size:16px;color:#282828;font-weight:normal;">05.22</div>
<div class="t" style="left:1266px;width:600px;text-align:right;top:642px;font-size:16px;color:#282828;font-weight:normal;">05.22</div>
<div class="a" style="left:956px;top:700px;width:919px;height:1px;background:#e4e4e4"></div>
<div class="t" style="left:452px;width:600px;text-align:right;top:675px;font-size:16px;color:#282828;font-weight:normal;">46</div>
<div class="t" style="left:1074px;top:675px;font-size:16px;color:#282828;font-weight:normal;letter-spacing:-0.262px;">Доплата за увеличение объема вып…</div>
<div class="t" style="left:975px;width:600px;text-align:right;top:675px;font-size:16px;color:#282828;font-weight:normal;">212,52</div>
<div class="t" style="left:1705px;top:675px;font-size:16px;color:#282828;font-weight:normal;">05.22</div>
<div class="t" style="left:1266px;width:600px;text-align:right;top:675px;font-size:16px;color:#282828;font-weight:normal;">05.22</div>
<div class="a" style="left:956px;top:733px;width:919px;height:1px;background:#e4e4e4"></div>
<div class="t" style="left:452px;width:600px;text-align:right;top:708px;font-size:16px;color:#282828;font-weight:normal;">55</div>
<div class="t" style="left:1074px;top:708px;font-size:16px;color:#282828;font-weight:normal;letter-spacing:-0.370px;">Премия  из ФЗП за текущий месяц</div>
<div class="t" style="left:975px;width:600px;text-align:right;top:708px;font-size:16px;color:#282828;font-weight:normal;">416,89</div>
<div class="t" style="left:1705px;top:708px;font-size:16px;color:#282828;font-weight:normal;">05.22</div>
<div class="t" style="left:1266px;width:600px;text-align:right;top:708px;font-size:16px;color:#282828;font-weight:normal;">05.22</div>
<div class="a" style="left:956px;top:734px;width:919px;height:32px;background:#ffcc99"></div>
<div class="a" style="left:956px;top:766px;width:919px;height:1px;background:#e4e4e4"></div>
<div class="t" style="left:452px;width:600px;text-align:right;top:741px;font-size:16px;color:#282828;font-weight:normal;">57</div>
<div class="t" style="left:1074px;top:741px;font-size:16px;color:#282828;font-weight:normal;letter-spacing:-0.180px;">Единовременная помощь</div>
<svg class="a" style="left:1372px;top:738px" width="22" height="18" viewBox="0 0 22 18"><path d="M4 10 L8.5 14.5 L18 3" fill="none" stroke="#7266e2" stroke-width="2.9" stroke-linecap="round" stroke-linejoin="round"/></svg>
<div class="t" style="left:975px;width:600px;text-align:right;top:741px;font-size:16px;color:#282828;font-weight:normal;">200,00</div>
<div class="t" style="left:1705px;top:741px;font-size:16px;color:#282828;font-weight:normal;">05.22</div>
<div class="t" style="left:1266px;width:600px;text-align:right;top:741px;font-size:16px;color:#282828;font-weight:normal;">05.22</div>
<div class="a" style="left:956px;top:799px;width:919px;height:1px;background:#e4e4e4"></div>
<div class="t" style="left:452px;width:600px;text-align:right;top:774px;font-size:16px;color:#282828;font-weight:normal;">80</div>
<div class="t" style="left:1074px;top:774px;font-size:16px;color:#282828;font-weight:normal;letter-spacing:-0.080px;">Надбавка за стаж</div>
<div class="t" style="left:975px;width:600px;text-align:right;top:774px;font-size:16px;color:#282828;font-weight:normal;">265,65</div>
<div class="t" style="left:1705px;top:774px;font-size:16px;color:#282828;font-weight:normal;">05.22</div>
<div class="t" style="left:1266px;width:600px;text-align:right;top:774px;font-size:16px;color:#282828;font-weight:normal;">05.22</div>
<div class="a" style="left:956px;top:800px;width:919px;height:32px;background:#ffcc99"></div>
<div class="a" style="left:956px;top:832px;width:919px;height:1px;background:#e4e4e4"></div>
<div class="t" style="left:452px;width:600px;text-align:right;top:807px;font-size:16px;color:#282828;font-weight:normal;">204</div>
<div class="t" style="left:1074px;top:807px;font-size:16px;color:#282828;font-weight:normal;letter-spacing:-0.209px;">Мед.страхование (от ковид и несч. …</div>
<svg class="a" style="left:1372px;top:804px" width="22" height="18" viewBox="0 0 22 18"><path d="M4 10 L8.5 14.5 L18 3" fill="none" stroke="#7266e2" stroke-width="2.9" stroke-linecap="round" stroke-linejoin="round"/></svg>
<div class="t" style="left:975px;width:600px;text-align:right;top:807px;font-size:16px;color:#282828;font-weight:normal;">2,72</div>
<div class="t" style="left:1705px;top:807px;font-size:16px;color:#282828;font-weight:normal;">05.22</div>
<div class="t" style="left:1266px;width:600px;text-align:right;top:807px;font-size:16px;color:#282828;font-weight:normal;">05.22</div>
<div class="a" style="left:956px;top:833px;width:919px;height:32px;background:#ffcc99"></div>
<div class="a" style="left:956px;top:865px;width:919px;height:1px;background:#e4e4e4"></div>
<div class="t" style="left:452px;width:600px;text-align:right;top:840px;font-size:16px;color:#282828;font-weight:normal;">205</div>
<div class="t" style="left:1074px;top:840px;font-size:16px;color:#282828;font-weight:normal;letter-spacing:-0.147px;">Мед.страхование.</div>
<svg class="a" style="left:1372px;top:837px" width="22" height="18" viewBox="0 0 22 18"><path d="M4 10 L8.5 14.5 L18 3" fill="none" stroke="#7266e2" stroke-width="2.9" stroke-linecap="round" stroke-linejoin="round"/></svg>
<div class="t" style="left:975px;width:600px;text-align:right;top:840px;font-size:16px;color:#282828;font-weight:normal;">72,96</div>
<div class="t" style="left:1705px;top:840px;font-size:16px;color:#282828;font-weight:normal;">05.22</div>
<div class="t" style="left:1266px;width:600px;text-align:right;top:840px;font-size:16px;color:#282828;font-weight:normal;">05.22</div>
<div class="a" style="left:985px;top:980px;width:862px;height:10px;background:#d3d3d3;border-radius:5px"></div>
<div class="a" style="left:985px;top:980px;width:755px;height:10px;background:#989898;border-radius:5px"></div>
<svg class="a" style="left:967px;top:981px" width="7" height="8" viewBox="0 0 7 8"><path d="M6 1.5 V6.5 L1.8 4 Z" fill="#c4c4c4"/></svg>
<svg class="a" style="left:1858px;top:981px" width="7" height="8" viewBox="0 0 7 8"><path d="M1 1.5 V6.5 L5.2 4 Z" fill="#333"/></svg>
</body></html>
